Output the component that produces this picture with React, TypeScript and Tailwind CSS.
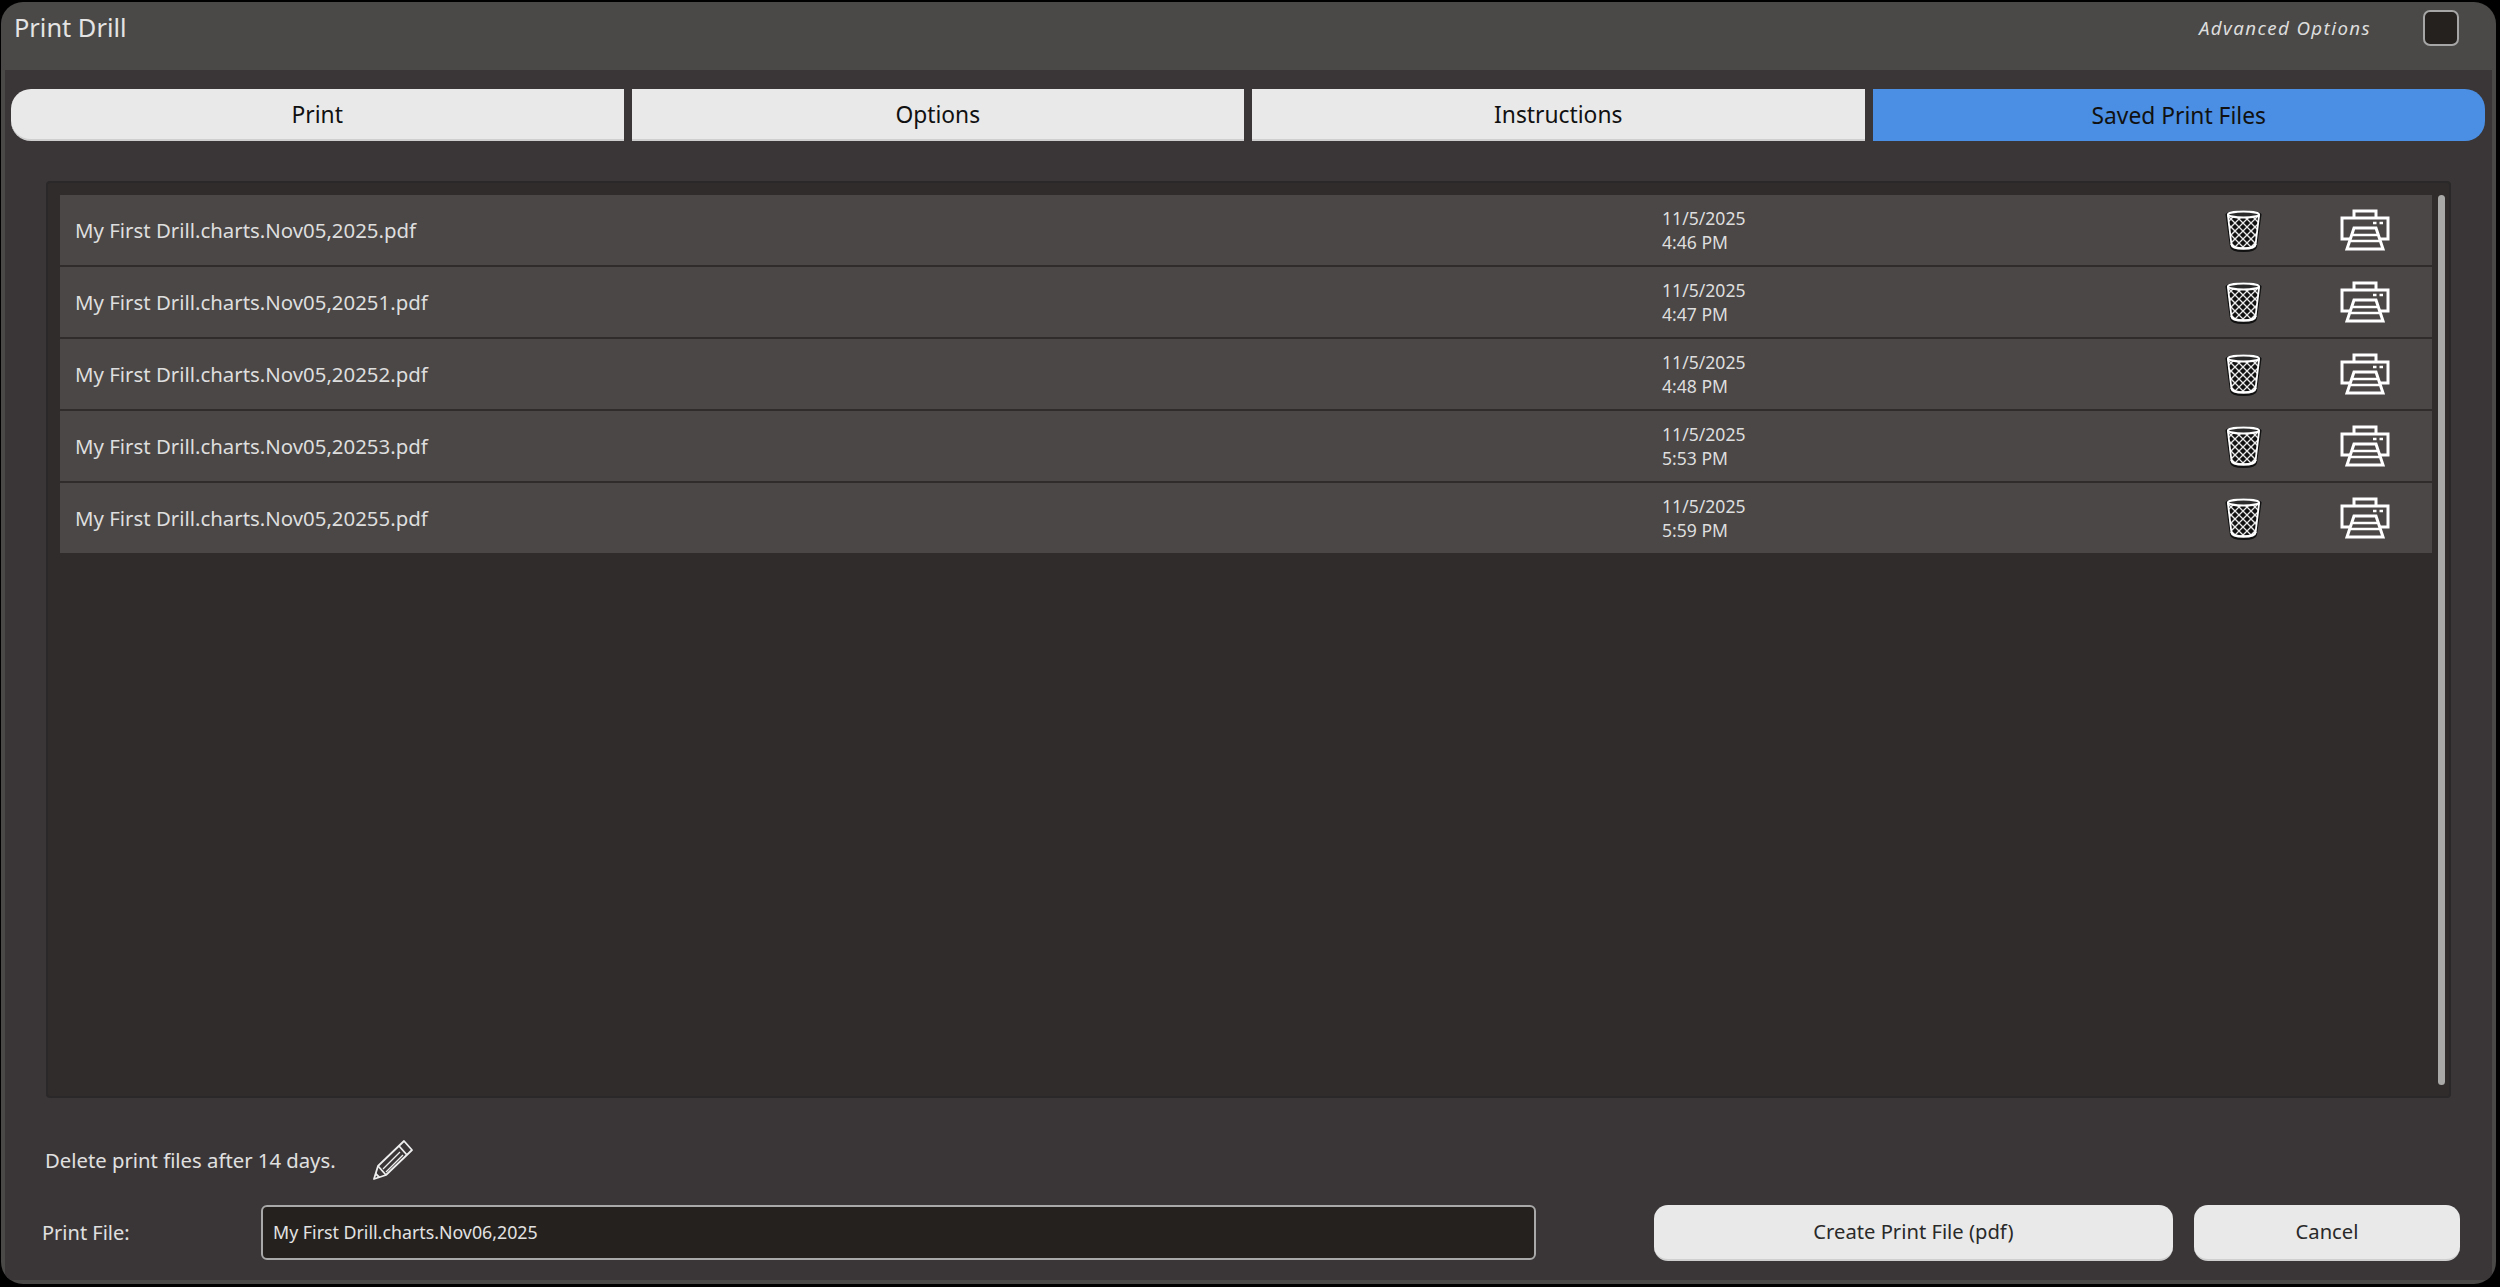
import React from "react";

const files = [
  ["My First Drill.charts.Nov05,2025.pdf", "4:46 PM"],
  ["My First Drill.charts.Nov05,20251.pdf", "4:47 PM"],
  ["My First Drill.charts.Nov05,20252.pdf", "4:48 PM"],
  ["My First Drill.charts.Nov05,20253.pdf", "5:53 PM"],
  ["My First Drill.charts.Nov05,20255.pdf", "5:59 PM"],
];

function Trash({ id }: { id: number }) {
  const lines: React.ReactNode[] = [];
  for (let i = -44; i < 50; i += 8) {
    lines.push(<path key={"a" + i} d={`M${i} 0L${i + 44} 44`} />);
    lines.push(<path key={"b" + i} d={`M${i + 44} 0L${i} 44`} />);
  }
  return (
    <svg width="37" height="43" viewBox="0 0 37 43" className="block">
      <defs>
        <clipPath id={"basket" + id}>
          <path d="M2 6L6.5 37Q7 40 18.5 40Q30 40 30.5 37L35 6Z" />
        </clipPath>
      </defs>
      <path d="M0.5 5.5C0.5 0 36.5 0 36.5 5.5L32 38Q31 43 18.5 43Q6 43 5 38Z" fill="#111" />
      <g clipPath={`url(#basket${id})`} stroke="#e8e8e8" strokeWidth="1.3" fill="none">{lines}</g>
      <ellipse cx="18.5" cy="5.5" rx="15.5" ry="3" fill="#2a2a2a" stroke="#fff" strokeWidth="2.2" />
      <path d="M6.5 35Q7 39.5 18.5 39.5Q30 39.5 30.5 35" fill="none" stroke="#fff" strokeWidth="2.4" />
      <path d="M3 7L6.5 36M34 7L30.5 36" fill="none" stroke="#fff" strokeWidth="1.8" />
    </svg>
  );
}

function Printer() {
  return (
    <svg width="50" height="42" viewBox="0 0 50 42" fill="none" stroke="#fff" strokeWidth="3" className="block">
      <path d="M14 9V2H36V9" />
      <path d="M10 30H2V9H48V30H40" />
      <path d="M14 19H36L43 40H7Z" />
      <path d="M13 26H37M11 32H39" strokeWidth="2.4" />
      <path d="M33 14H36.5M39.5 14H43" strokeWidth="2.4" />
    </svg>
  );
}

function Pencil() {
  return (
    <svg width="42" height="42" viewBox="0 0 42 42" fill="none" stroke="#eeeeee" strokeWidth="1.8" strokeLinejoin="round" className="block">
      <path d="M32 2L40 11L14 36L2 40L6 27Z" />
      <path d="M27 7L35 16" />
      <path d="M28 13L11 30M31 16L14 33" strokeWidth="1.3" />
      <path d="M6 27L14 36" />
      <path d="M3.5 34.5L7.5 38.5" />
    </svg>
  );
}

function Tab({ label, active, className }: { label: string; active?: boolean; className: string }) {
  return (
    <div
      className={`flex h-[52px] flex-1 items-center justify-center pt-[2px] text-[22.8px] text-[#111] ${active ? "bg-[#4a8fe3]" : "border-b-2 border-[#cfcfcf] bg-[#e9e9e9]"} ${className}`}
    >
      {label}
    </div>
  );
}

export default function App() {
  return (
    <div className="h-[1287px] w-[2500px] overflow-hidden bg-black pl-[1px] pt-[2px] font-['Noto_Sans','Open_Sans',sans-serif]">
      <div className="flex h-[1282px] w-[2495px] flex-col overflow-hidden rounded-[22px] bg-[#4a4947] px-[4px] pb-[4px]">
        <header className="-mx-[4px] flex h-[68px] shrink-0 items-start justify-between">
          <div className="pl-[13px] pt-[8px] text-[25.4px] leading-[34px] text-[#e4e4e4]">Print Drill</div>
          <div className="flex items-center pr-[37px] pt-[8px]">
            <span className="mr-[52px] text-[18.7px] italic leading-[36px] tracking-[1.4px] text-[#dddddd]">Advanced Options</span>
            <div className="h-[36px] w-[36px] rounded-[7px] border-2 border-[#a6a6a6] bg-[#25211f]" />
          </div>
        </header>

        <main className="flex min-h-0 flex-1 flex-col bg-[#3a3637] pr-[1px]">
          <nav className="mt-[19px] flex h-[52px] shrink-0 gap-[8px] pl-[6px] pr-[6px]">
            <Tab label="Print" className="rounded-l-[20px]" />
            <Tab label="Options" className="" />
            <Tab label="Instructions" className="" />
            <Tab label="Saved Print Files" active className="rounded-r-[20px]" />
          </nav>

          <section className="ml-[41px] mr-[40px] mt-[40px] flex h-[917px] shrink-0 rounded-[4px] border-2 border-[#2a2828] bg-[#302c2b] pb-[11px] pl-[12px] pr-[4px] pt-[12px]">
            <div className="flex min-w-0 flex-1 flex-col gap-[2px]">
              {files.map(([name, time], i) => (
                <div key={name} className="flex h-[70px] shrink-0 items-center bg-[#4a4746] text-[#dedede]">
                  <div className="w-[1602px] pl-[15px] text-[20.4px]">{name}</div>
                  <div className="w-[563px] text-[17.6px] leading-[24px]">
                    <div>11/5/2025</div>
                    <div>{time}</div>
                  </div>
                  <div className="w-[115px]">
                    <Trash id={i} />
                  </div>
                  <Printer />
                </div>
              ))}
            </div>
            <div className="ml-[6px] h-full w-[7px] rounded-full bg-[#a9a9a8]" />
          </section>

          <div className="ml-[40px] mt-[41px] flex h-[44px] shrink-0 items-center text-[20.3px] text-[#e0e0e0]">
            <span className="-translate-y-px">Delete print files after 14 days.</span>
            <span className="ml-[36px] -translate-y-px"><Pencil /></span>
          </div>

          <div className="mt-[22px] flex h-[55px] shrink-0 items-center pl-[37px]">
            <label className="w-[219px] text-[20px] text-[#e0e0e0]">Print File:</label>
            <div className="flex h-[55px] w-[1275px] items-center rounded-[6px] border-2 border-[#a9a9a9] bg-[#25211e] pl-[10px] text-[17.8px] text-[#e2e2e2]">
              My First Drill.charts.Nov06,2025
            </div>
            <button className="ml-[118px] h-[56px] w-[519px] rounded-[14px] border-b-2 border-[#cfcfcf] bg-[#e9e9e9] text-[20.2px] text-[#2a2a2a]">
              Create Print File (pdf)
            </button>
            <button className="ml-[21px] h-[56px] w-[266px] rounded-[14px] border-b-2 border-[#cfcfcf] bg-[#e9e9e9] text-[20.2px] text-[#2a2a2a]">
              Cancel
            </button>
          </div>
        </main>
      </div>
    </div>
  );
}
